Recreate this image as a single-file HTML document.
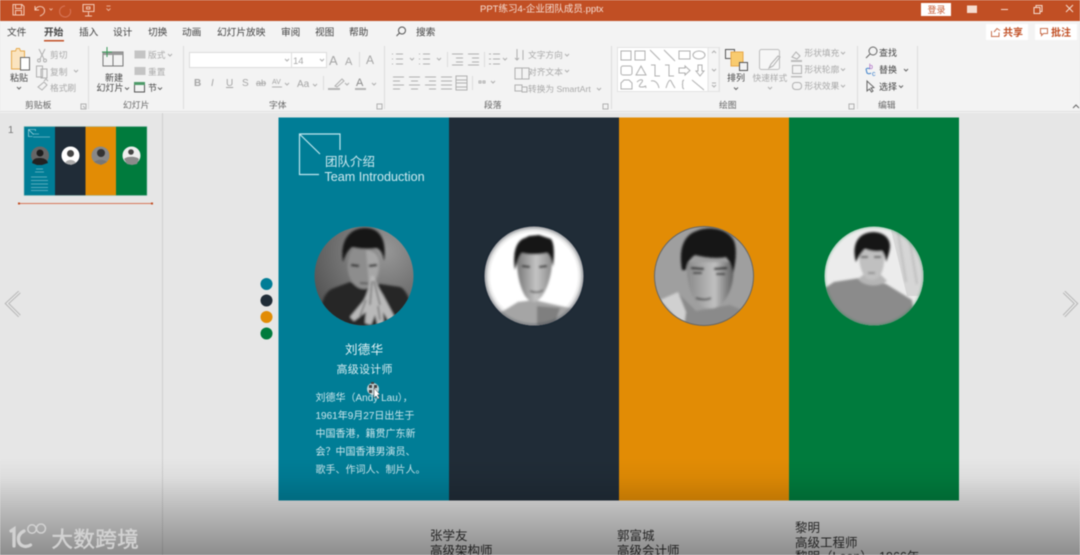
<!DOCTYPE html>
<html lang="zh"><head><meta charset="utf-8"><title>PPT</title>
<style>
html,body{margin:0;padding:0;width:1080px;height:555px;overflow:hidden;background:#e6e6e6}
svg{display:block;position:absolute;left:0;top:0;filter:blur(.45px)}
text{font-family:"Liberation Sans","Noto Sans CJK SC",sans-serif}
.t{font-size:9.700px;fill:#444}
.g{font-size:8.700px;fill:#a9a9a9}
.n{font-size:9px;fill:#444}
.l{font-size:8.800px;fill:#666}
.ic{fill:none;stroke:#b0b0b0;stroke-width:1}
.id{fill:none;stroke:#666;stroke-width:1}
</style></head><body>
<svg width="1080" height="555" viewBox="0 0 1080 555" xmlns="http://www.w3.org/2000/svg">
<defs>
<clipPath id="c1"><circle cx="364" cy="276" r="49.5"/></clipPath>
<clipPath id="c2"><circle cx="534" cy="276" r="49.5"/></clipPath>
<clipPath id="c3"><circle cx="704" cy="276" r="49.5"/></clipPath>
<clipPath id="c4"><circle cx="874" cy="276" r="49.5"/></clipPath>
<linearGradient id="fade" x1="0" y1="0" x2="0" y2="1">
<stop offset="0" stop-color="#000" stop-opacity="0"/><stop offset=".2" stop-color="#000" stop-opacity=".04"/><stop offset=".55" stop-color="#000" stop-opacity=".2"/><stop offset="1" stop-color="#000" stop-opacity=".39"/></linearGradient>
<radialGradient id="bg1" cx=".7" cy=".25" r=".9"><stop offset="0" stop-color="#989898"/><stop offset="1" stop-color="#4c4c4c"/></radialGradient>
<radialGradient id="bg2"><stop offset=".86" stop-color="#fff"/><stop offset="1" stop-color="#c9c9c9"/></radialGradient>
<linearGradient id="f2" x1="0" y1="0" x2="1" y2="0"><stop offset="0" stop-color="#777"/><stop offset=".55" stop-color="#c4c4c4"/><stop offset="1" stop-color="#8a8a8a"/></linearGradient>
<linearGradient id="f3" x1="0" y1="0" x2="1" y2="0"><stop offset="0" stop-color="#8a8a8a"/><stop offset=".6" stop-color="#c0c0c0"/><stop offset="1" stop-color="#5e5e5e"/></linearGradient>
<filter id="b1"><feGaussianBlur stdDeviation="1"/></filter>
<filter id="b2"><feGaussianBlur stdDeviation="2"/></filter>
</defs>

<!-- workspace -->
<rect width="1080" height="555" fill="#e6e6e6"/>
<rect x="162" y="113" width="1" height="442" fill="#cfcfcf"/>

<!-- title bar -->
<rect width="1080" height="21" fill="#c14f24"/>
<g fill="none" stroke="#f3c9b5" stroke-width="1">
<path d="M13 4.500h9l2 2v8.500h-11z M15.500 4.500v4h6v-4 M15.500 15v-4.500h6V15"/>
<path d="M35 6v4h4 M35.500 9.500c2-4 8-4 9 .5 .5 3-2 5-4.500 6"/>
<path d="M49.500 8.500l1.500 1.500 1.500-1.500" stroke-width=".8"/>
<path d="M65 6a5.500 5.500 0 1 0 5 3" stroke="#d9775a"/>
<path d="M83 4.500h11v7h-11z M88.500 11.500v4.500 M85 16h7 M86.500 7h3.500v2h-3.500z"/>
<path d="M106.500 6h4 M106.500 8.500l2 2 2-2" stroke-width=".8"/>
</g>
<text x="480" y="12" font-size="9.500" fill="#f5dfd5">PPT练习4-企业团队成员.pptx</text>
<rect x="921" y="3" width="30" height="13" fill="#fff"/>
<text x="927.500" y="13" font-size="9" fill="#c75a33">登录</text>
<g fill="none" stroke="#f5dccf" stroke-width="1">
<rect x="967.500" y="6" width="9" height="6.500" fill="#f5dccf"/>
<path d="M1001 9.500h7" />
<path d="M1034 7.500h6v6h-6z M1036 7.500v-2h6v6h-2"/>
<path d="M1066 5l7 7 M1073 5l-7 7"/>
</g>

<!-- tabs -->
<rect y="21" width="1080" height="92" fill="#f3f3f3"/>
<text class="t" x="7" y="35.500">文件</text>
<text class="t" x="44" y="35.500" style="font-weight:700">开始</text>
<rect x="44" y="40" width="20" height="1.500" fill="#c14f24"/>
<text class="t" x="79" y="35.500">插入</text>
<text class="t" x="113" y="35.500">设计</text>
<text class="t" x="148" y="35.500">切换</text>
<text class="t" x="182" y="35.500">动画</text>
<text class="t" x="217" y="35.500">幻灯片放映</text>
<text class="t" x="281" y="35.500">审阅</text>
<text class="t" x="315" y="35.500">视图</text>
<text class="t" x="349" y="35.500">帮助</text>
<circle cx="402" cy="30.500" r="3.500" fill="none" stroke="#555"/><path d="M399.500 33l-3 3" stroke="#555" fill="none"/>
<text class="t" x="416" y="35.500">搜索</text>
<rect x="986" y="24" width="42" height="16" fill="#fff"/>
<path d="M991.500 31v5.500h7.500v-4 M994 32l3-3.500 3 2" fill="none" stroke="#c9704f"/>
<text x="1003" y="36" font-size="10" font-weight="700" fill="#c14f24">共享</text>
<rect x="1035" y="24" width="42" height="16" fill="#fff"/>
<path d="M1040.500 28.500h7v5h-4l-2 2v-2h-1z" fill="none" stroke="#c9704f"/>
<text x="1051" y="36" font-size="10" font-weight="700" fill="#c14f24">批注</text>

<!-- ribbon separators -->
<rect y="111" width="1080" height="1" fill="#e1e1e1"/>
<g fill="#dcdcdc">
<rect x="88" y="46" width="1" height="63"/><rect x="183" y="46" width="1" height="63"/><rect x="384" y="46" width="1" height="63"/><rect x="611" y="46" width="1" height="63"/><rect x="857" y="46" width="1" height="63"/><rect x="917" y="46" width="1" height="63"/>
<rect x="447" y="52" width="1" height="15"/><rect x="484" y="52" width="1" height="15"/><rect x="472" y="76" width="1" height="14"/><rect x="323" y="76" width="1" height="14"/><rect x="359" y="52" width="1" height="15"/>
</g>

<!-- clipboard -->
<path d="M11.500 51h4l1-2.500h3l1 2.500h4v18h-13z" fill="#fbe4bf" stroke="#e7a94b"/>
<rect x="20.500" y="57.500" width="9" height="12.500" fill="#fff" stroke="#666"/>
<text class="n" x="10" y="81">粘贴</text>
<path d="M17 87l2 2 2-2" class="id"/>
<path d="M39 49l5 10 M45 49l-5 10" class="ic"/><circle cx="39" cy="60.500" r="1.500" class="ic"/><circle cx="45" cy="60.500" r="1.500" class="ic"/>
<text class="g" x="50" y="58">剪切</text>
<path d="M36.500 66h6v11h-6z M41 69h6v9h-6z" class="ic" fill="#f3f3f3"/>
<text class="g" x="50" y="75">复制</text>
<path d="M74 70l2 2 2-2" class="ic"/>
<path d="M38 87l6-5 3 3-5 5z M44 81l2-2 2 2" class="ic" stroke-width="1.300"/>
<text class="g" x="50" y="91">格式刷</text>
<text class="l" x="25" y="108">剪贴板</text>
<path d="M81 104h5v5h-5z M83 106l2 2" class="ic"/>

<!-- slides -->
<rect x="103" y="52" width="20" height="14" fill="#f3f3f3" stroke="#777"/><rect x="103" y="52" width="20" height="3" fill="#999"/><path d="M113 55v11" stroke="#777"/>
<path d="M107 47v10 M102 52h10" stroke="#3b9a5a" fill="none"/>
<text class="n" x="105" y="81">新建</text>
<text class="n" x="96.500" y="91">幻灯片</text><path d="M125 87.500l2 2 2-2" class="id"/>
<rect x="134.500" y="50.500" width="11" height="8" fill="#c4c4c4"/><text class="g" x="148" y="58">版式</text><path d="M168 54l2 2 2-2" class="ic"/>
<rect x="134.500" y="67" width="11" height="8" fill="#c4c4c4"/><text class="g" x="148" y="75">重置</text>
<rect x="134.500" y="83" width="10" height="9" fill="#f3f3f3" stroke="#555"/><rect x="134" y="82" width="11" height="3" fill="#4d9a68"/>
<text class="n" x="148" y="91">节</text><path d="M158 87.500l2 2 2-2" class="id"/>
<text class="l" x="123" y="108">幻灯片</text>

<!-- font -->
<rect x="189.500" y="52.500" width="102" height="15" fill="#fff" stroke="#dcdcdc"/>
<rect x="291.500" y="52.500" width="35" height="15" fill="#fff" stroke="#dcdcdc"/>
<text class="g" x="293" y="64" style="font-size:9.500px">14</text>
<path d="M285 59l2 2 2-2 M320 59l2 2 2-2" class="ic"/>
<text x="329" y="65" font-size="13" fill="#a5a5a5">A</text><text x="345" y="65" font-size="11" fill="#a5a5a5">A</text>
<text x="366" y="64" font-size="12" fill="#a5a5a5">A</text>
<g font-size="10" fill="#a5a5a5">
<text x="194" y="86" font-weight="700">B</text><text x="211" y="86" font-style="italic">I</text><text x="226" y="86" text-decoration="underline">U</text><text x="242" y="86">S</text><text x="256" y="86" text-decoration="line-through" font-size="9">ab</text><text x="272" y="84" font-size="7">AV</text><text x="297" y="87">Aa</text>
</g>
<path d="M272 87h10 M285 83l2 2 2-2 M313 84l2 2 2-2" class="ic"/>
<path d="M335 86l7-7 2 2-7 6z" class="ic"/><rect x="328" y="88" width="12" height="2" fill="#b5b5b5"/>
<path d="M345 83l2 2 2-2 M372 83l2 2 2-2" class="ic"/>
<text x="356" y="86" font-size="11" fill="#888">A</text><rect x="355" y="88" width="11" height="2" fill="#b5b5b5"/>
<text class="l" x="269" y="108">字体</text>
<path d="M377 104h5v5h-5z" class="ic"/>

<!-- paragraph -->
<g class="ic">
<path d="M392 54h1 M392 59h1 M392 64h1 M396 54h7 M396 59h7 M396 64h7 M419 54h1 M419 59h1 M419 64h1 M423 54h7 M423 59h7 M423 64h7 M410 58l2 2 2-2 M437 58l2 2 2-2"/>
<path d="M452 54h11 M456 58h7 M456 62h7 M452 65h11 M468 54h11 M472 58h7 M472 62h7 M468 65h11 M489 54h2 M489 59h2 M489 64h2 M493 54h7 M493 59h7 M493 64h7 M503 58l2 2 2-2"/>
<path d="M393 77h11 M393 81h7 M393 85h11 M393 89h7 M409 77h11 M411 81h7 M409 85h11 M411 89h7 M425 77h11 M429 81h7 M425 85h11 M429 89h7 M441 77h11 M441 81h11 M441 85h11 M441 89h11 M456 76h11v14h-11z M456 80h11 M456 83h11 M456 87h11"/>
<path d="M479 81h2v2h-2z M483 81h2v2h-2z M491 81l2 2 2-2"/>
<path d="M517 49v11 M515 58l2 2 2-2 M523 50v10"/>
<path d="M515 68h14v11h-14z M522 68v11"/>
<path d="M515 85h7v6h-7z M522 87h5v5h-5z" />
</g>
<text class="g" x="528" y="58">文字方向</text><path d="M565 54l2 2 2-2" class="ic"/>
<text class="g" x="528" y="75">对齐文本</text><path d="M565 70l2 2 2-2" class="ic"/>
<text class="g" x="528" y="92">转换为 SmartArt</text><path d="M597 88l2 2 2-2" class="ic"/>
<text class="l" x="484" y="108">段落</text>
<path d="M603 104h5v5h-5z" class="ic"/>

<!-- shapes -->
<rect x="617.500" y="47.500" width="102" height="44" fill="#fff" stroke="#e3e3e3"/>
<rect x="708" y="47.500" width="11" height="44" fill="#f5f5f5" stroke="#e3e3e3"/>
<g class="ic" stroke-width="1.100">
<rect x="621" y="51" width="10" height="9"/><rect x="635" y="51" width="10" height="9"/>
<path d="M650 50l10 10 M664 50l11 11"/><rect x="679" y="51" width="11" height="8"/><ellipse cx="699" cy="55" rx="6" ry="4"/>
<rect x="621" y="66" width="11" height="9" rx="2"/><path d="M636 75l5-9 5 9z M651 65h4v11h5 M665 65h4v11h5 M679 68h6v-2l5 4.500-5 4.500v-2h-6z M698 65h4v6h2l-4 5-4-5h2z"/>
<path d="M621 89v-6l3-3h5l3 3v6z M637 82c3-3 7-3 5 0s-5 5 0 5 3-3 4 1 M651 81c4-1 7 2 8 7 M666 88c2-7 4-9 5-7s2 4 4 7 M684 80c-3 1 0 4-2 4.500 2 .5-1 3 2 4.500 M692 80l12 10"/>
<path d="M712 53l2-2 2 2 M712 69l2 2 2-2 M712 85l2 2 2-2 M712 83h4"/>
</g>
<rect x="725.500" y="49.500" width="9" height="9" fill="#f3f3f3" stroke="#555"/>
<rect x="731" y="52" width="12" height="14" fill="#f8cb6f" stroke="#e7a94b"/>
<rect x="739.500" y="62.500" width="8" height="8" fill="#f3f3f3" stroke="#555"/>
<text class="n" x="727" y="81">排列</text><path d="M734 87.500l2 2 2-2" class="id"/>
<rect x="759.500" y="49.500" width="20" height="20" rx="2" fill="#f6f6f6" stroke="#bdbdbd"/>
<path d="M769 68l4-2 7-9-2-1-7 8z" class="ic"/>
<text class="g" x="752.500" y="81">快速样式</text><path d="M768 87l2 2 2-2" class="ic"/>
<text class="l" x="719" y="108">绘图</text>
<path d="M849 104h5v5h-5z" class="ic"/>
<path d="M792 57l4-5 4 4-3 3z" class="ic"/><rect x="791" y="60" width="11" height="2" fill="#bdbdbd"/>
<text class="g" x="804.500" y="56">形状填充</text><path d="M841 52l2 2 2-2" class="ic"/>
<rect x="792.500" y="65.500" width="9" height="8" class="ic"/><rect x="791" y="76" width="11" height="1.500" fill="#bdbdbd"/>
<text class="g" x="804.500" y="72.500">形状轮廓</text><path d="M841 68.500l2 2 2-2" class="ic"/>
<rect x="792.500" y="82.500" width="9" height="7" rx="3" class="ic"/>
<text class="g" x="804.500" y="89">形状效果</text><path d="M841 85l2 2 2-2" class="ic"/>

<!-- editing -->
<circle cx="873" cy="51" r="4" class="id"/><path d="M870 54l-4 4" class="id"/>
<text class="n" x="879" y="56">查找</text>
<path d="M866 69c1-1 3-1 4 0 M866 69l1 4c1 1 3 1 4 0" fill="none" stroke="#3b7fc9"/>
<text x="869" y="69" font-size="7" fill="#a75fc0">b</text><text x="872" y="76" font-size="7" fill="#3b7fc9">c</text>
<text class="n" x="879" y="73">替换</text><path d="M904 69l2 2 2-2" class="id"/>
<path d="M867 81v10l2.500-2 2 3 1.500-1-2-3 3-.5z" class="id"/>
<text class="n" x="879" y="90">选择</text><path d="M899 85.500l2 2 2-2" class="id"/>
<text class="l" x="878" y="108">编辑</text>
<path d="M1073 108l3-3 3 3" class="id"/>

<!-- thumbnail -->
<text x="8" y="133" font-size="10" fill="#777">1</text>
<rect x="24" y="126.500" width="31" height="69" fill="#007d96"/><rect x="55" y="126.500" width="30.500" height="69" fill="#202c37"/><rect x="85.500" y="126.500" width="30.500" height="69" fill="#e28c05"/><rect x="116" y="126.500" width="31" height="69" fill="#007b3d"/>
<rect x="24" y="126.500" width="123" height="69" fill="none" stroke="#8fc0b8" stroke-width=".5"/>
<path d="M35.500 131v-1.500h-7v7h4 M28.500 129.500l5 5" fill="none" stroke="#bfe5ec" stroke-width=".6"/>
<path d="M33 134h6 M33 137h17" stroke="#bfe5ec" stroke-width=".8" opacity=".6"/>
<circle cx="40" cy="155.500" r="9" fill="#666"/><circle cx="40" cy="153" r="3.500" fill="#1d1d1d"/><path d="M32 163c1-5 5-5 8-5s7 1 8 5l-6 2h-5z" fill="#222"/>
<circle cx="70.500" cy="155.500" r="9" fill="#fff"/><circle cx="70.500" cy="153.500" r="3.500" fill="#444"/><path d="M65 163c2-4 9-4 11 0l-5 2z" fill="#aaa"/>
<circle cx="100.500" cy="155.500" r="9" fill="#888"/><circle cx="101" cy="153" r="4" fill="#333"/><path d="M94 162c3-3 10-3 13 0l-6 3z" fill="#777"/>
<circle cx="131.500" cy="155.500" r="9" fill="#eee"/><circle cx="131" cy="152" r="2.800" fill="#444"/><path d="M124 159c3-3 12-3 15 0l-2 5-5 1-5-1z" fill="#8b8b8b"/>
<g stroke="#bfe0e8" stroke-width=".9" opacity=".45"><path d="M36 169h7 M35 172h9 M31 177h16 M31 180.500h17 M31 184h17 M31 187.500h17 M31 190.500h17"/></g>
<path d="M19 203.500h133" stroke="#d7765a"/><rect x="18" y="202.500" width="2" height="2" fill="#c14f24"/><rect x="151" y="202.500" width="2" height="2" fill="#c14f24"/>

<!-- slide -->
<rect x="278.500" y="117.500" width="171" height="383" fill="#007d96"/>
<rect x="449" y="117.500" width="170" height="383" fill="#202c37"/>
<rect x="619" y="117.500" width="170" height="383" fill="#e28c05"/>
<rect x="789" y="117.500" width="170" height="383" fill="#007b3d"/>

<!-- logo -->
<g fill="none" stroke="#bfe6ee" stroke-width="1.200">
<path d="M340 150V134H299.500V174.500H319"/><path d="M300 134.500L320 154"/>
</g>
<text x="325" y="166" font-size="12.500" fill="#cfeaf0">团队介绍</text>
<text x="324.500" y="181" font-size="12.600" fill="#cfeaf0">Team Introduction</text>

<!-- side dots -->
<circle cx="266.500" cy="284" r="6" fill="#007d96"/><circle cx="266.500" cy="300.500" r="6" fill="#202c37"/><circle cx="266.500" cy="317" r="6" fill="#e28c05"/><circle cx="266.500" cy="333.500" r="6" fill="#007b3d"/>

<!-- portrait 1 -->
<g clip-path="url(#c1)"><rect x="314" y="226" width="100" height="100" fill="url(#bg1)"/>
<g filter="url(#b1)">
<path d="M320 326c0-18 2-34 14-38l16-6 14 6 16-4 20 3c8 3 13 20 14 39z" fill="#262626"/>
<ellipse cx="364" cy="266" rx="16.500" ry="23" fill="#8d8d8d"/>
<path d="M366 250c8 1 13 5 13 14 0 10-4 18-10 22z" fill="#a6a6a6"/>
<path d="M343 262c-3-18 4-33 21-34 16-1 23 12 20 33-1-7-3-11-7-13-8 2-19 1-25-1-4 3-7 8-9 15z" fill="#131313"/>
<path d="M351 265l8 1 M369 266l8-1" stroke="#1c1c1c" stroke-width="2.300"/>
<path d="M360 283l8 .5" stroke="#444" stroke-width="1.500"/>
<path d="M371 276l3 0c3 8 5 13 9 19l9 17 5 10-6 3-8-13 1 14-6 1-3-12-4 10-6-2 1-11-12 9-4-4 10-12c6-6 8-14 11-29z" fill="#b9b9b9"/>
<path d="M372 281l-2 24 M374 281l6 24 M366 300l-6 16 M378 306l2 14" stroke="#3b3b3b" stroke-width="1"/>
</g></g>

<!-- portrait 2 -->
<g clip-path="url(#c2)"><rect x="484" y="226" width="100" height="100" fill="url(#bg2)"/>
<g filter="url(#b1)">
<path d="M500 313l18-11 16-2 22 5 18 4-10 20h-60z" fill="#a5a5a5"/>
<path d="M537 306l23 2-6 18h-17z" fill="#7f7f7f"/>
<path d="M517 262c0-12 8-20 18-20s18 8 17 20c0 14-7 38-18 40-11 0-17-24-17-40z" fill="url(#f2)"/>
<path d="M522 266l8 1 M539 267l8-1" stroke="#222" stroke-width="2"/>
<path d="M530 291c5 2 9 2 13-1" stroke="#555" stroke-width="1.500" fill="none"/>
<path d="M515 270c-3-18 2-30 10-32l4-2 10-1 12 4c4 6 3 18 2 28-1-6-3-12-6-14-8 2-19 2-25 0-3 3-5 9-7 17z" fill="#191919"/>
</g></g>

<!-- portrait 3 -->
<g clip-path="url(#c3)"><rect x="654" y="226" width="100" height="100" fill="#9f9f9f"/>
<g filter="url(#b1)">
<path d="M660 305l20-10 16 16 34-6 24 10-4 14h-90z" fill="#8a8a8a"/>
<path d="M660 300l18-8 8 20-2 15z" fill="#d0d0d0"/>
<path d="M687 262l46 0c2 18-3 36-14 44-6 4-14 3-20-1-9-8-13-27-12-43z" fill="url(#f3)"/>
<path d="M691 268l13 1 M714 269l13-1" stroke="#1c1c1c" stroke-width="2.300"/>
<path d="M693 273h9 M716 274h9" stroke="#2c2c2c" stroke-width="2"/>
<path d="M696 298c5 2 11 2 15 0" stroke="#444" stroke-width="1.800" fill="none"/>
<path d="M682 270c-3-18 0-32 12-38 14-7 34-4 40 9 3 8 2 20-1 32-2-8-3-12-7-16-10 2-23 0-31-2-5 3-8 8-9 15z" fill="#121212"/>
</g></g>
<circle cx="704" cy="276" r="49.500" fill="none" stroke="#666" stroke-width="1"/>

<!-- portrait 4 -->
<g clip-path="url(#c4)"><rect x="824" y="226" width="100" height="100" fill="#ececec"/>
<path d="M890 226h35v70l-18 0z" fill="#d6d6d6"/><path d="M898 232l8 50 M908 230l9 54" stroke="#b0b0b0" stroke-width="2" opacity=".6" fill="none" filter="url(#b1)"/>
<g filter="url(#b1)">
<path d="M822 290l12-8 26-4 26 6 26 16 4 30h-96z" fill="#8b8b8b"/>
<path d="M858 279c5 7 20 9 29 2l-6-6h-18z" fill="#b5b5b5"/>
<path d="M859 250l25-1c1 10 0 22-5 28-3 3-9 4-13 1-5-5-8-18-7-28z" fill="#c0c0c0"/>
<path d="M861 257h7 M874 257h7" stroke="#333" stroke-width="1.600"/>
<path d="M868 273h7" stroke="#666" stroke-width="1.200"/>
<path d="M856 262c-4-14 0-26 11-29 11-3 23 2 23 13 0 5-2 10-4 16-1-6-2-8-4-11-6 1-12 0-17-2-3 3-6 7-9 13z" fill="#181818"/>
</g></g>
<g fill="none" filter="url(#b1)" stroke-width="2"><circle cx="534" cy="276" r="49" stroke="#202c37" opacity=".35"/><circle cx="874" cy="276" r="49.500" stroke="#007b3d" opacity=".35"/></g>

<!-- slide text -->
<text x="345" y="354" font-size="12.500" fill="#e5f3f6" letter-spacing=".3">刘德华</text>
<text x="336.500" y="373" font-size="11" fill="#d8edf1" letter-spacing=".25">高级设计师</text>
<g font-size="10" fill="#cbe6ec">
<text x="315.500" y="401">刘德华（Andy Lau），</text>
<text x="315.500" y="419">1961年9月27日出生于</text>
<text x="315.500" y="437">中国香港，籍贯广东新</text>
<text x="315.500" y="455">会？中国香港男演员、</text>
<text x="315.500" y="473">歌手、作词人、制片人。</text>
</g>
<!-- cursor -->
<circle cx="373" cy="389" r="6" fill="#e0e0e0" opacity=".85"/>
<g fill="#444"><rect x="369" y="385" width="3" height="3"/><rect x="374" y="385" width="3" height="3"/><rect x="369" y="390" width="3" height="3"/><rect x="371" y="382" width="3" height="2"/></g>
<path d="M374 388v10l2-2 2 3 1.500-1-2-3 2.500-.5z" fill="#fff" stroke="#333" stroke-width=".5"/>

<!-- nav arrows -->
<g fill="none" stroke-linejoin="miter">
<path d="M19.500 292L7 303.500 19.500 316" stroke="#b9b9b9" stroke-width="3.500"/>
<path d="M19.500 292L7 303.500 19.500 316" stroke="#e9e9e9" stroke-width="1.300"/>
<path d="M1064 292L1076 303.500 1064 316" stroke="#b9b9b9" stroke-width="3.500"/>
<path d="M1064 292L1076 303.500 1064 316" stroke="#e9e9e9" stroke-width="1.300"/>
</g>

<!-- text below slide -->
<g font-size="12.500" fill="#333">
<text x="430" y="540">张学友</text><text x="430" y="555">高级架构师</text>
<text x="617" y="540">郭富城</text><text x="617" y="555">高级会计师</text>
<text x="795" y="532">黎明</text><text x="795" y="547">高级工程师</text><text x="795" y="561">黎明（Leon），1966年</text>
</g>

<!-- bottom fade -->
<rect y="458" width="1080" height="97" fill="url(#fade)"/>

<!-- watermark -->
<g fill="none" stroke="#d2d2d2" stroke-linecap="round">
<path d="M11 531l3-2v17" stroke-width="3.300"/>
<path d="M24 531c-4 2-6 5-5.500 9 .5 6 7 8 12 5" stroke-width="3.300"/>
<circle cx="32" cy="529" r="4.200" stroke-width="1.500"/><circle cx="41" cy="528.500" r="4.500" stroke-width="1.500"/>
</g>
<text x="51.500" y="547" font-size="21.500" fill="#d2d2d2" stroke="#d2d2d2" stroke-width=".5" letter-spacing=".4">大数跨境</text>
</svg>
</body></html>
